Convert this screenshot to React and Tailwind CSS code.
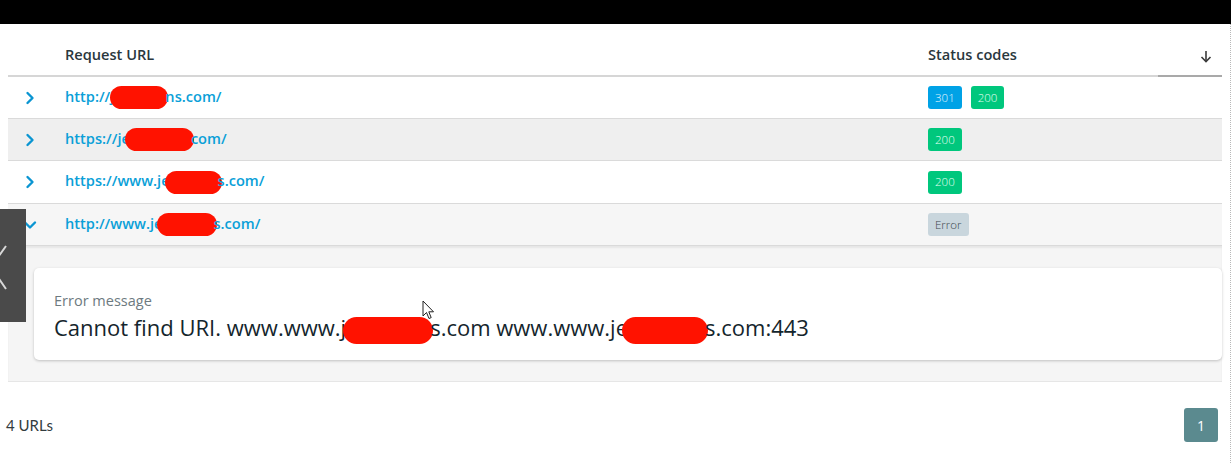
import React from "react";

const Pill = ({ w, ml = 0, mr = 0, h = 23 }) => (
  <span
    className="inline-block rounded-full bg-[#ff1200] align-middle"
    style={{ width: w, height: h, marginLeft: ml, marginRight: mr }}
  />
);

const Chevron = ({ down }) => (
  <svg width="14" height="14" viewBox="0 0 14 14" className="text-[#0a95d2]">
    {down ? (
      <polyline points="2,4.5 7,9.5 12,4.5" fill="none" stroke="currentColor" strokeWidth="2.4" strokeLinecap="round" strokeLinejoin="round" />
    ) : (
      <polyline points="4.5,2 9.5,7 4.5,12" fill="none" stroke="currentColor" strokeWidth="2.4" strokeLinecap="round" strokeLinejoin="round" />
    )}
  </svg>
);

const Badge = ({ kind, children }) => {
  const cls =
    kind === "blue"
      ? "bg-[#00a2e6] text-[#e6f6ff]"
      : kind === "green"
      ? "bg-[#00c77d] text-[#e6fff3]"
      : "bg-[#c9d6dd] text-[#3b474d]";
  return (
    <span className={`inline-flex h-[23px] items-center rounded-[3px] px-[7px] text-[11.5px] font-light leading-none ${cls}`}>
      {children}
    </span>
  );
};

const Row = ({ bg, url, badges, down, h = "h-[42px]" }) => (
  <div className={`grid ${h} grid-cols-[57px_863px_230px_64px] items-center border-b border-[#dadada] ${bg}`}>
    <div className="flex pl-[15px]">
      <Chevron down={down} />
    </div>
    <div className="text-[14.6px] font-semibold text-[#0aa0d8] whitespace-nowrap">{url}</div>
    <div className="flex gap-[9px]">{badges}</div>
    <div />
  </div>
);

export default function App() {
  return (
    <div className="relative h-[463px] w-[1231px] overflow-hidden bg-white" style={{ fontFamily: '"Open Sans", "Noto Sans", sans-serif' }}>
      <div className="h-[24px] bg-black" />
      <div className="flex h-[439px] flex-col border-r border-dotted border-[#b8b8b8]">
        <div className="ml-[8px] w-[1214px]">
          {/* header */}
          <div className="grid h-[53px] grid-cols-[57px_863px_230px_64px] border-b-2 border-[#d6d6d6] text-[14.6px] font-semibold text-[#2a373d]">
            <div />
            <div className="flex items-end pb-[9px]">Request URL</div>
            <div className="flex items-end pb-[9px]">Status codes</div>
            <div className="relative flex items-end justify-end pb-[12px] pr-[10px]">
              <svg width="12" height="13" viewBox="0 0 12 13">
                <line x1="6" y1="1" x2="6" y2="11.5" stroke="#3a3a3a" strokeWidth="1.6" />
                <polyline points="1.5,7 6,11.5 10.5,7" fill="none" stroke="#3a3a3a" strokeWidth="1.6" />
              </svg>
              <div className="absolute bottom-[-2px] left-0 right-0 h-[2px] bg-[#a9a9a9]" />
            </div>
          </div>

          <Row
            bg="bg-white"
            url={<>http://j<Pill w={58} ml={-4} mr={-3} />ns.com/</>}
            badges={<><Badge kind="blue">301</Badge><Badge kind="green">200</Badge></>}
          />
          <Row
            bg="bg-[#efefef]"
            url={<>https://je<Pill w={69} ml={-5} mr={-3} />com/</>}
            badges={<Badge kind="green">200</Badge>}
          />
          <Row
            bg="bg-white"
            h="h-[43px]"
            url={<>https://www.je<Pill w={57} ml={-5} mr={-4} />s.com/</>}
            badges={<Badge kind="green">200</Badge>}
          />
          <Row
            bg="bg-[#f6f6f6]"
            down
            url={<>http://www.je<Pill w={60} ml={-5} mr={-4} />s.com/</>}
            badges={<Badge kind="grey">Error</Badge>}
          />

          {/* expanded panel */}
          <div className="border-b border-[#e6e6e6] bg-[#f5f5f5] pb-[21px] pl-[26px] pt-[22px] shadow-[inset_0_2px_2px_rgba(0,0,0,0.06)]">
            <div className="rounded-[5px] bg-white px-[20px] pb-[16px] pt-[23px] shadow-[0_1px_3px_rgba(0,0,0,0.22)]">
              <div className="text-[14.5px] leading-[20px] text-[#6d7a80]">Error message</div>
              <div className="whitespace-nowrap text-[22px] leading-[32px] text-[#14252c]">
                Cannot find URI. www.www.j<Pill w={90} h={27} ml={-3} mr={-3} />s.com www.www.je<Pill w={86} h={27} ml={-6} mr={-3} />s.com:443
              </div>
            </div>
          </div>
        </div>

        {/* footer */}
        <div className="flex flex-1 items-center justify-between pl-[6px] pr-[12px] pt-[6px]">
          <span className="text-[15px] text-[#333c40]" style={{ fontFamily: 'Lato, sans-serif' }}>4 URLs</span>
          <span className="flex h-[34px] w-[34px] items-center justify-center rounded-[3px] bg-[#5b8a8f] text-[14px] text-white">1</span>
        </div>
      </div>

      {/* left side overlay tab */}
      <div className="absolute left-0 top-[209px] h-[113px] w-[26px] bg-[#4a4a4a]">
        <svg width="26" height="113" viewBox="0 0 26 113">
          <polyline points="6,37 -9,58 6,80" fill="none" stroke="#d8d8d8" strokeWidth="2" />
        </svg>
      </div>

      {/* mouse cursor */}
      <svg className="absolute left-[422px] top-[300px]" width="13" height="20" viewBox="0 0 13 20">
        <path d="M1 1 L1 16 L4.5 12.5 L7 18.5 L9.2 17.6 L6.8 11.8 L11.5 11.8 Z" fill="white" stroke="#222" strokeWidth="1" strokeLinejoin="round" />
      </svg>
    </div>
  );
}
